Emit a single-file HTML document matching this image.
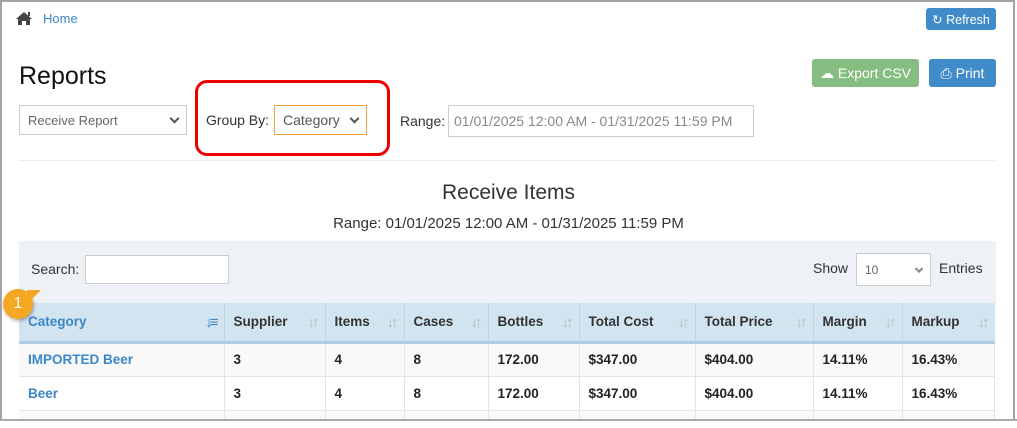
<!DOCTYPE html>
<html><head><style>
*{box-sizing:border-box;margin:0;padding:0}
html,body{width:1017px;height:428px;overflow:hidden}
body{background:#fff;position:relative;font-family:"Liberation Sans",sans-serif;color:#333}
.frame{position:absolute;left:0;top:0;width:1015px;height:421px;border:2px solid #a3a3a3;border-bottom:none}
.a{position:absolute}
.btn{position:absolute;color:#fff;border-radius:3px;font-size:13px;display:flex;align-items:center;justify-content:center;gap:4px}
.sel{position:absolute;border:1px solid #ccc;font-size:13px;color:#666;padding-left:8px;display:flex;align-items:center}
.chev{position:absolute;right:8px;top:50%;width:7px;height:7px;border-right:2px solid #555;border-bottom:2px solid #555;transform:translateY(-70%) rotate(45deg)}
.tw{position:absolute;left:19px;top:303px;width:976px;height:116px;overflow:hidden}
table{width:976px;border-collapse:collapse;font-size:13.5px;font-weight:bold}
th{background:#d2e4f0;height:39px;text-align:left;padding-left:9px;border-right:1px solid #bcd6e8;border-bottom:3px solid #aecde3;position:relative;color:#333}
th .s{position:absolute;right:8px;top:11px;color:#bbb;font-size:15px;letter-spacing:-3px;font-weight:bold}
td{height:34px;padding-left:9px;border-right:1px solid #e4e4e4;border-bottom:1px solid #e4e4e4;color:#222}
tr.r1 td{background:#f9f9f9}
.blue{color:#3a87c9}
</style></head><body>
<div class="frame"></div>
<svg class="a" style="left:15px;top:11px" width="18" height="14" viewBox="0 0 18 14"><path d="M9 1L1 8h2v6h4v-4h4v4h4V8h2z" fill="#444"/><rect x="13" y="1" width="2" height="4" fill="#444"/></svg>
<div class="a blue" style="left:43px;top:11px;font-size:13px">Home</div>
<div class="btn" style="left:926px;top:8px;width:70px;height:22px;background:#428bca;font-size:12.5px">&#x21bb; Refresh</div>
<div class="a" style="left:19px;top:62px;font-size:25px;color:#111">Reports</div>
<div class="btn" style="left:812px;top:59px;width:107px;height:28px;background:#86bd80;font-size:14px">&#9729; Export CSV</div>
<div class="btn" style="left:929px;top:59px;width:67px;height:28px;background:#428bca;font-size:14px">&#9113; Print</div>
<div class="sel" style="left:19px;top:105px;width:168px;height:30px">Receive Report<span class="chev"></span></div>
<div class="a" style="left:195px;top:80px;width:195px;height:76px;border:3px solid #e00;border-radius:12px"></div>
<div class="a" style="left:206px;top:112px;font-size:14px">Group By:</div>
<div class="sel" style="left:274px;top:105px;width:93px;height:30px;border-color:#f0a040;color:#555;font-size:14px">Category<span class="chev"></span></div>
<div class="a" style="left:400px;top:113px;font-size:14px">Range:</div>
<div class="sel" style="left:448px;top:105px;width:306px;height:32px;font-size:14px;color:#888;padding-left:5px">01/01/2025 12:00 AM - 01/31/2025 11:59 PM</div>
<div class="a" style="left:19px;top:160px;width:977px;border-top:1px dotted #ddd"></div>
<div class="a" style="left:0;width:1017px;top:181px;text-align:center;font-size:21px;color:#333">Receive Items</div>
<div class="a" style="left:0;width:1017px;top:215px;text-align:center;font-size:15px;color:#333">Range: 01/01/2025 12:00 AM - 01/31/2025 11:59 PM</div>
<div class="a" style="left:19px;top:241px;width:977px;height:62px;background:#eef2f6"></div>
<div class="a" style="left:31px;top:261px;font-size:14px">Search:</div>
<div class="a" style="left:85px;top:255px;width:144px;height:29px;background:#fff;border:1px solid #ccc"></div>
<div class="a" style="left:813px;top:260px;font-size:14px">Show</div>
<div class="sel" style="left:856px;top:253px;width:75px;height:33px;font-size:12px;background:#fff">10<span class="chev" style="border-color:#888;width:6px;height:6px"></span></div>
<div class="a" style="left:939px;top:260px;font-size:14px">Entries</div>
<div class="tw"><table>
<tr><th style="width:205px" class="blue">Category<span class="s" style="color:#3a87c9">&#8595;&#8801;</span></th><th style="width:101px">Supplier<span class="s">&#8595;&#8593;</span></th><th style="width:79px">Items<span class="s">&#8595;&#8593;</span></th><th style="width:84px">Cases<span class="s">&#8595;&#8593;</span></th><th style="width:91px">Bottles<span class="s">&#8595;&#8593;</span></th><th style="width:116px">Total Cost<span class="s">&#8595;&#8593;</span></th><th style="width:118px">Total Price<span class="s">&#8595;&#8593;</span></th><th style="width:89px">Margin<span class="s">&#8595;&#8593;</span></th><th style="border-right:none">Markup<span class="s">&#8595;&#8593;</span></th></tr>
<tr class="r1"><td class="blue">IMPORTED Beer</td><td>3</td><td>4</td><td>8</td><td>172.00</td><td>$347.00</td><td>$404.00</td><td>14.11%</td><td>16.43%</td></tr>
<tr><td class="blue">Beer</td><td>3</td><td>4</td><td>8</td><td>172.00</td><td>$347.00</td><td>$404.00</td><td>14.11%</td><td>16.43%</td></tr>
<tr class="r1"><td></td><td></td><td></td><td></td><td></td><td></td><td></td><td></td><td></td></tr>
</table></div>
<div class="a" style="left:0;top:419px;width:1017px;height:9px;background:#fff;border-top:2px solid #aaa"></div>
<div class="a" style="left:3px;top:289px;width:30px;height:30px;border-radius:50%;background:#f5a623;box-shadow:1px 2px 3px rgba(0,0,0,.3);color:#fff;font-size:16px;display:flex;align-items:center;justify-content:center">1</div>
<div class="a" style="left:27px;top:290px;width:0;height:0;border-left:14px solid #f5a623;border-bottom:14px solid transparent"></div>
</body></html>
